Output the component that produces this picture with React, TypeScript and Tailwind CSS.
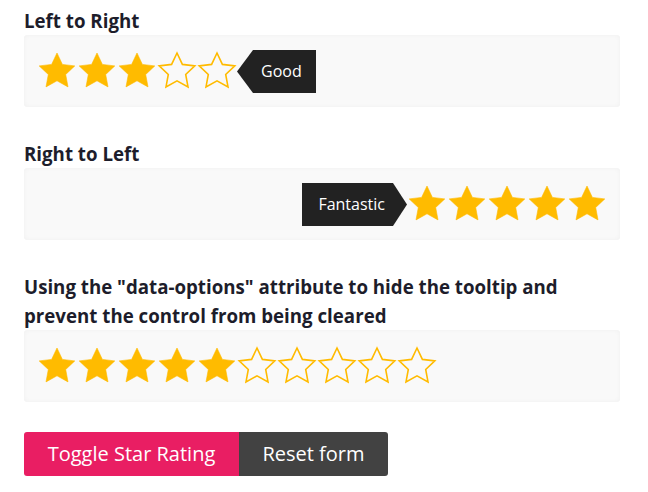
import React, { useState } from 'react';

const STAR = 'M20 2l5.4 11.4 12.4 1.5-9.1 8.6 2.3 12.4L20 29.8 9 35.9l2.3-12.4-9.1-8.6 12.4-1.5z';

const Star: React.FC<{ filled: boolean }> = ({ filled }) => (
  <svg width="40" height="40" viewBox="0 0 40 40" className="shrink-0">
    <path
      d={STAR}
      fill={filled ? '#ffbb00' : 'none'}
      stroke="#ffbb00"
      strokeWidth={filled ? 0.6 : 1.6}
      strokeLinejoin="miter"
    />
  </svg>
);

const Tip: React.FC<{ label: string; side: 'left' | 'right' }> = ({ label, side }) => (
  <div className="flex h-[43px] items-stretch">
    {side === 'left' && (
      <svg width="16" height="43" viewBox="0 0 16 43">
        <path d="M16 0L0 21.5 16 43z" fill="#222222" />
      </svg>
    )}
    <div
      className={`flex items-center bg-[#222222] text-[16px] text-white ${
        side === 'left' ? 'pl-2 pr-[14px]' : 'pl-[16px] pr-2'
      }`}
    >
      {label}
    </div>
    {side === 'right' && (
      <svg width="14" height="43" viewBox="0 0 14 43">
        <path d="M0 0L14 21.5 0 43z" fill="#222222" />
      </svg>
    )}
  </div>
);

const Box: React.FC<{ children: React.ReactNode; end?: boolean }> = ({ children, end }) => (
  <div
    className={`flex h-[72px] items-center rounded-[3px] bg-[#f9f9f9] px-[13px] shadow-[inset_0_0_5px_rgba(0,0,0,0.04)] ${
      end ? 'justify-end' : ''
    }`}
  >
    {children}
  </div>
);

export default function App() {
  const [ltr] = useState(3);
  const [rtl] = useState(5);
  const [opts] = useState(5);

  return (
    <div
      className="min-h-screen bg-white pt-[6px] pl-6 pr-7 text-[#1d1d2b]"
      style={{ fontFamily: '"Open Sans", "Liberation Sans", sans-serif' }}
    >
      <h2 className="text-[18.7px] font-bold leading-[29px]">Left to Right</h2>
      <Box>
        {[1, 2, 3, 4, 5].map((n) => (
          <Star key={n} filled={n <= ltr} />
        ))}
        <Tip label="Good" side="left" />
      </Box>

      <h2 className="mt-8 text-[18.7px] font-bold leading-[29px]">Right to Left</h2>
      <Box end>
        <Tip label="Fantastic" side="right" />
        {[1, 2, 3, 4, 5].map((n) => (
          <Star key={n} filled={n <= rtl} />
        ))}
      </Box>

      <h2 className="mt-[32px] text-[18.7px] font-bold leading-[29px]">
        Using the "data-options" attribute to hide the tooltip and prevent the control from being cleared
      </h2>
      <Box>
        {[1, 2, 3, 4, 5, 6, 7, 8, 9, 10].map((n) => (
          <Star key={n} filled={n <= opts} />
        ))}
      </Box>

      <div className="mt-[30px] flex">
        <button className="h-[44px] w-[215px] rounded-l-[3px] bg-[#e91e63] text-[20px] text-white">
          Toggle Star Rating
        </button>
        <button className="h-[44px] w-[149px] rounded-r-[3px] bg-[#424242] text-[20px] text-white">
          Reset form
        </button>
      </div>
    </div>
  );
}
